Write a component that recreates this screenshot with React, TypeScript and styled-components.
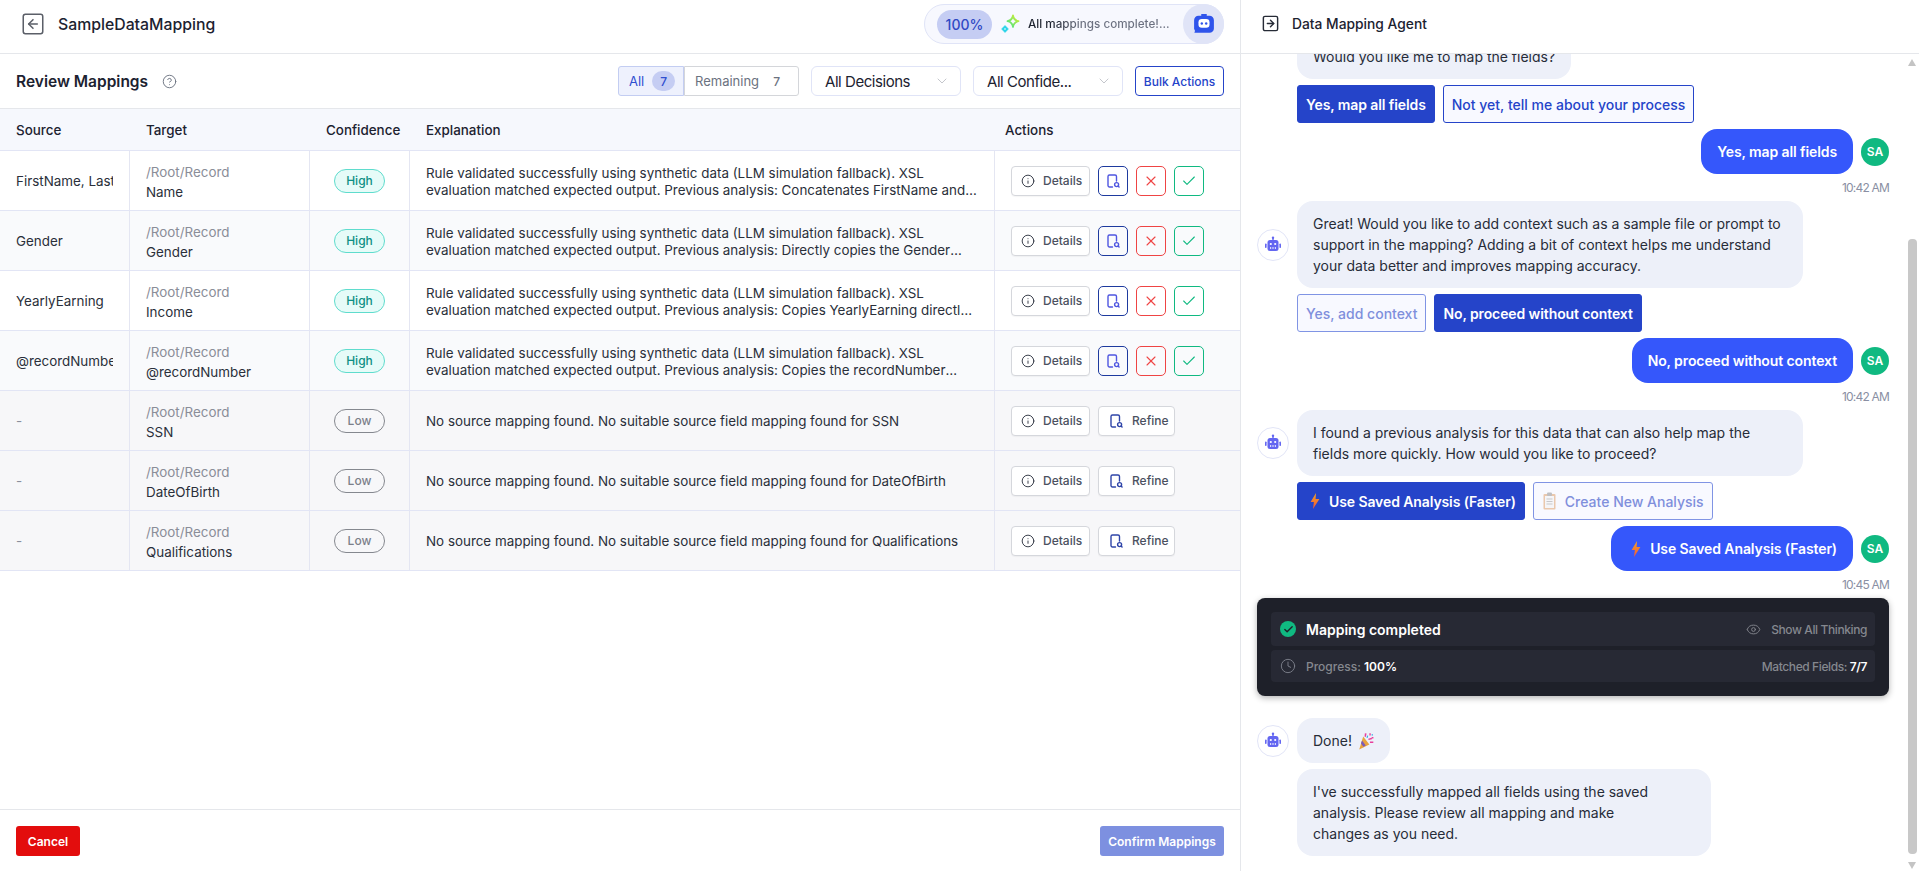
import React from 'react'
import styled, { createGlobalStyle } from 'styled-components'
import { Check, ChevronDown, CircleHelp, Clock, Eye, Info, SquareArrowLeft, SquareArrowRight, X } from 'lucide-react'

const GlobalStyle = createGlobalStyle`
  html, body { margin: 0; padding: 0; height: 100%; background: #fff; overflow: hidden; }
  body { font-family: Inter, "Noto Sans", sans-serif; color: #1f2430; }
  * { box-sizing: border-box; }
`

type Row = { source: string; target: string; confidence: 'High' | 'Low'; explanation: string }

const passed = 'Rule validated successfully using synthetic data (LLM simulation fallback). XSL evaluation matched expected output. Previous analysis: '
const missing = 'No source mapping found. No suitable source field mapping found for '

const rows: Row[] = [
  { source: 'FirstName, LastName', target: 'Name', confidence: 'High', explanation: passed + 'Concatenates FirstName and LastName into the Name field' },
  { source: 'Gender', target: 'Gender', confidence: 'High', explanation: passed + 'Directly copies the Gender value from source to the target field' },
  { source: 'YearlyEarning', target: 'Income', confidence: 'High', explanation: passed + 'Copies YearlyEarning directly to the Income field in target' },
  { source: '@recordNumber', target: '@recordNumber', confidence: 'High', explanation: passed + 'Copies the recordNumber attribute from source to target field' },
  { source: '-', target: 'SSN', confidence: 'Low', explanation: missing + 'SSN' },
  { source: '-', target: 'DateOfBirth', confidence: 'Low', explanation: missing + 'DateOfBirth' },
  { source: '-', target: 'Qualifications', confidence: 'Low', explanation: missing + 'Qualifications' },
]

const RefineIcon = () => (
  <svg width="16" height="16" viewBox="0 0 16 16" fill="none" stroke="currentColor" strokeWidth="1.4" strokeLinecap="round">
    <path d="M7.5 14H4.5A1.5 1.5 0 0 1 3 12.5V3.5A1.5 1.5 0 0 1 4.5 2H10A1.5 1.5 0 0 1 11.5 3.5V8" />
    <circle cx="11.6" cy="11.6" r="2" />
    <path d="M13.2 13.2l.9.9" />
  </svg>
)

const BotIcon = () => (
  <svg width="18" height="18" viewBox="0 0 18 18" fill="#6366f1">
    <rect x="8.3" y="1" width="1.4" height="3" />
    <circle cx="9" cy="1.8" r="1.2" />
    <rect x="3.5" y="4" width="11" height="11" rx="2.5" />
    <rect x="1" y="7.5" width="1.6" height="4.5" rx=".8" />
    <rect x="15.4" y="7.5" width="1.6" height="4.5" rx=".8" />
    <circle cx="6.8" cy="8" r="1.1" fill="#fff" />
    <circle cx="11.2" cy="8" r="1.1" fill="#fff" />
    <path d="M6 11.2h1.2v1.6H6zM8.4 11.2h1.2v1.6H8.4zM10.8 11.2H12v1.6h-1.2z" fill="#fff" />
  </svg>
)

const ChatBotIcon = () => (
  <svg width="22" height="22" viewBox="0 0 20 20">
    <path d="M5 2.5h2.5V1h5v1.5H15A4 4 0 0 1 19 6.5V14a4 4 0 0 1-4 4H1.2C2 16.8 2 15.8 1 14.6V6.5a4 4 0 0 1 4-4Z" fill="#2f54eb" />
    <rect x="5" y="5.5" width="10" height="8" rx="3" fill="#fff" />
    <circle cx="8" cy="9.5" r="1.1" fill="#2f54eb" />
    <circle cx="12" cy="9.5" r="1.1" fill="#2f54eb" />
  </svg>
)

const SparkleIcon = () => (
  <svg width="20" height="20" viewBox="0 0 20 20" fill="none" strokeWidth="1.8" strokeLinejoin="round">
    <defs>
      <linearGradient id="sparkA" x1="0" y1="1" x2="1" y2="0">
        <stop offset="0" stopColor="#3fe08a" />
        <stop offset="1" stopColor="#d9ef2c" />
      </linearGradient>
    </defs>
    <path d="M13 1.5c.5 3.5 1.8 5 5.5 5.7-3.7.7-5 2.2-5.5 5.8-.5-3.6-1.8-5.1-5.5-5.8 3.7-.7 5-2.2 5.5-5.7Z" stroke="url(#sparkA)" />
    <path d="M5 11.5l3.4 3.5L5 18.5 1.6 15Z" fill="#27d3e8" stroke="#27d3e8" strokeWidth=".6" />
    <path d="M5 14l1 1-1 1-1-1Z" fill="#eafcff" />
  </svg>
)

const BoltIcon = () => (
  <svg width="10" height="16" viewBox="0 0 10 16">
    <defs>
      <linearGradient id="boltA" x1="0" y1="0" x2="0" y2="1">
        <stop offset="0" stopColor="#f5a623" />
        <stop offset="1" stopColor="#f0553a" />
      </linearGradient>
    </defs>
    <path d="M6 0 .6 9h3.3L3 16l6.4-10H5.6Z" fill="url(#boltA)" />
  </svg>
)

const ClipboardIcon = () => (
  <svg width="13" height="18" viewBox="0 0 13 18" opacity=".6">
    <rect x=".5" y="2" width="12" height="15.5" rx="1" fill="#e2a878" />
    <rect x="2" y="4" width="9" height="12" fill="#f4f4f4" />
    <rect x="4" y=".5" width="5" height="3.5" rx="1" fill="#9a9a9a" />
    <path d="M3.5 7h6M3.5 9.5h6M3.5 12h6" stroke="#a9a9a9" />
  </svg>
)

const PartyIcon = () => (
  <svg width="16" height="18" viewBox="0 0 14 16">
    <path d="M4.5 4 10 11 1 15.5Z" fill="#e8a33d" />
    <path d="M3.5 7.5 6.8 12 4.6 13.2 2.5 10Z" fill="#7a5bb8" />
    <path d="M6 1l1.5.4-.6 3-1.2-.3ZM10 1h1.2v2H10ZM12 4.5h1.6v1.2H12ZM9 6l3-.8.3 1.200-3 .8ZM10.500 8.500h3v1.200h-3Z" fill="#e83e9c" />
    <path d="M8 3l1 .4-.6 2-1-.4ZM12 2h1.200v1.200H12Z" fill="#2fa8e8" />
  </svg>
)

const App = () => {
  return (
    <Page>
      <GlobalStyle />
      <Workspace>
        <TopBar>
          <TitleGroup>
            <SquareArrowLeft size={26} strokeWidth={1.4} color="#5b5f68" />
            <PageTitle>SampleDataMapping</PageTitle>
          </TitleGroup>
          <StatusPill>
            <Percent>100%</Percent>
            <SparkleIcon />
            <StatusText>All mappings complete!...</StatusText>
            <BotBadge><ChatBotIcon /></BotBadge>
          </StatusPill>
        </TopBar>

        <Toolbar>
          <SectionTitle>Review Mappings</SectionTitle>
          <CircleHelp size={15} strokeWidth={1.5} color="#6b7280" />
          <Filters>
            <Segments>
              <Segment $active>All <Count $active>7</Count></Segment>
              <Segment>Remaining <Count>7</Count></Segment>
            </Segments>
            <SelectBox>All Decisions<ChevronDown size={16} strokeWidth={1.5} color="#c4c6cc" /></SelectBox>
            <SelectBox>All Confide...<ChevronDown size={16} strokeWidth={1.5} color="#c4c6cc" /></SelectBox>
            <BulkButton>Bulk Actions</BulkButton>
          </Filters>
        </Toolbar>

        <TableHead>
          <HeadCell>Source</HeadCell>
          <HeadCell>Target</HeadCell>
          <HeadCell>Confidence</HeadCell>
          <HeadCell>Explanation</HeadCell>
          <HeadCell $tight>Actions</HeadCell>
        </TableHead>

        {rows.map((row, i) => (
          <TableRow key={row.target} $low={row.confidence === 'Low'} $odd={i % 2 === 1}>
            <SourceCell $empty={row.source === '-'}><SourceText>{row.source}</SourceText></SourceCell>
            <TargetCell>
              <TargetPath>/Root/Record</TargetPath>
              <TargetName>{row.target}</TargetName>
            </TargetCell>
            <BadgeCell><Badge $low={row.confidence === 'Low'}>{row.confidence}</Badge></BadgeCell>
            <TextCell><Explanation>{row.explanation}</Explanation></TextCell>
            <ActionCell>
              <ActionButton><Info size={14} strokeWidth={1.6} color="#2d3340" />Details</ActionButton>
              {row.confidence === 'High' ? (
                <>
                  <IconButton $tone="blue"><RefineIcon /></IconButton>
                  <IconButton $tone="red"><X size={16} strokeWidth={1.6} /></IconButton>
                  <IconButton $tone="green"><Check size={16} strokeWidth={1.6} /></IconButton>
                </>
              ) : (
                <ActionButton $refine><RefineTint><RefineIcon /></RefineTint>Refine</ActionButton>
              )}
            </ActionCell>
          </TableRow>
        ))}

        <Footer>
          <CancelButton>Cancel</CancelButton>
          <ConfirmButton>Confirm Mappings</ConfirmButton>
        </Footer>
      </Workspace>

      <Agent>
        <AgentHeader>
          <SquareArrowRight size={19} strokeWidth={1.8} color="#262b36" />
          <AgentTitle>Data Mapping Agent</AgentTitle>
        </AgentHeader>
        <Messages>
          <BotMessage>
            <span />
            <Bubble>Would you like me to map the fields?</Bubble>
            <Options>
              <Option $solid>Yes, map all fields</Option>
              <Option>Not yet, tell me about your process</Option>
            </Options>
          </BotMessage>
          <UserMessage>Yes, map all fields</UserMessage>
          <Time>10:42 AM</Time>

          <BotMessage>
            <BotAvatar />
            <Bubble $wide={506}>Great! Would you like to add context such as a sample file or prompt to support in the mapping? Adding a bit of context helps me understand your data better and improves mapping accuracy.</Bubble>
            <Options>
              <Option $faded>Yes, add context</Option>
              <Option $solid>No, proceed without context</Option>
            </Options>
          </BotMessage>
          <UserMessage>No, proceed without context</UserMessage>
          <Time>10:42 AM</Time>

          <BotMessage>
            <BotAvatar />
            <Bubble $wide={506}>I found a previous analysis for this data that can also help map the fields more quickly. How would you like to proceed?</Bubble>
            <Options>
              <Option $solid><BoltIcon />Use Saved Analysis (Faster)</Option>
              <Option $faded><ClipboardIcon />Create New Analysis</Option>
            </Options>
          </BotMessage>
          <UserMessage><BoltIcon />Use Saved Analysis (Faster)</UserMessage>
          <Time>10:45 AM</Time>

          <ResultCard>
            <ResultRow $tall>
              <CompletedIcon><Check size={11} strokeWidth={3} color="#1e2029" /></CompletedIcon>
              <ResultTitle>Mapping completed</ResultTitle>
              <ThinkingLink><Eye size={15} strokeWidth={1.5} />Show All Thinking</ThinkingLink>
            </ResultRow>
            <ResultRow>
              <Clock size={16} strokeWidth={1.4} color="#7d808b" />
              <ResultLabel>Progress: <strong>100%</strong></ResultLabel>
              <ResultMatched>Matched Fields: <strong>7/7</strong></ResultMatched>
            </ResultRow>
          </ResultCard>

          <BotMessage>
            <BotAvatar />
            <Bubble>Done! <PartyIcon /></Bubble>
            <Bubble $column $wide={414}>I've successfully mapped all fields using the saved analysis. Please review all mapping and make changes as you need.</Bubble>
          </BotMessage>
        </Messages>
        <Scrollbar>
          <ArrowUp />
          <Thumb />
          <ArrowDown />
        </Scrollbar>
      </Agent>
    </Page>
  )
}

const BotAvatar = () => <AvatarCircle><BotIcon /></AvatarCircle>

const UserMessage = ({ children }: { children: React.ReactNode }) => (
  <UserLine>
    <UserBubble>{children}</UserBubble>
    <UserAvatar>SA</UserAvatar>
  </UserLine>
)

export default App

const Page = styled.div`
  display: flex;
  width: 1919px;
  height: 871px;
  overflow: hidden;
`

const Workspace = styled.main`
  width: 1240px;
  height: 871px;
  display: flex;
  flex-direction: column;
`

const TopBar = styled.header`
  height: 54px;
  flex: none;
  display: flex;
  align-items: center;
  justify-content: space-between;
  padding: 0 16px 5px 20px;
  border-bottom: 1px solid #e5e7eb;
`

const TitleGroup = styled.div`
  display: flex;
  align-items: center;
  gap: 12px;
`

const PageTitle = styled.h1`
  margin: 0;
  font-size: 15.8px;
  font-weight: 500;
  color: #1c2230;
`

const StatusPill = styled.div`
  width: 300px;
  height: 40px;
  display: flex;
  align-items: center;
  padding-left: 12px;
  border: 1px solid #e0e4f7;
  border-radius: 20px;
  background: #f7f8fe;
`

const Percent = styled.span`
  width: 55px;
  height: 29px;
  display: flex;
  align-items: center;
  justify-content: center;
  margin-right: 8px;
  border-radius: 15px;
  background: #c5cdf3;
  color: #3049c4;
  font-size: 14px;
  font-weight: 500;
`

const StatusText = styled.span`
  margin-left: 8px;
  font-size: 11.7px;
  font-weight: 500;
  background: linear-gradient(90deg, #1f2430 0, #1f2430 24px, #6b7080 50px);
  background-clip: text;
  -webkit-background-clip: text;
  color: transparent;
`

const BotBadge = styled.span`
  width: 41px;
  height: 40px;
  margin: -1px -1px -1px auto;
  display: flex;
  align-items: center;
  justify-content: center;
  border-radius: 50%;
  background: #e0e4f7;
`

const Toolbar = styled.div`
  height: 55px;
  flex: none;
  display: flex;
  align-items: center;
  gap: 14px;
  padding: 0 16px;
  border-bottom: 1px solid #e5e7eb;
`

const SectionTitle = styled.h2`
  margin: 0;
  font-size: 15.5px;
  font-weight: 600;
  color: #1c2230;
`

const Filters = styled.div`
  margin-left: auto;
  display: flex;
  align-items: center;
  gap: 12px;
`

const Segments = styled.div`
  width: 181px;
  height: 30px;
  display: grid;
  grid-template-columns: 66px 1fr;
`

const Segment = styled.div<{ $active?: boolean }>`
  display: flex;
  align-items: center;
  justify-content: ${(p) => (p.$active ? 'flex-start' : 'space-between')};
  gap: 8px;
  padding: ${(p) => (p.$active ? '0 5px 0 10px' : '0 18px 0 10px')};
  font-size: 13px;
  color: ${(p) => (p.$active ? '#2f4fd0' : '#6b7280')};
  background: ${(p) => (p.$active ? '#eef1fd' : '#fff')};
  border: 1px solid ${(p) => (p.$active ? '#c3cdf2' : '#d4d6da')};
  border-radius: ${(p) => (p.$active ? '3px 0 0 3px' : '0 3px 3px 0')};
`

const Count = styled.span<{ $active?: boolean }>`
  min-width: ${(p) => (p.$active ? '23px' : '0')};
  height: 20px;
  display: flex;
  align-items: center;
  justify-content: center;
  border-radius: 10px;
  font-size: 12px;
  font-weight: 500;
  background: ${(p) => (p.$active ? '#c5cdf3' : 'transparent')};
`

const SelectBox = styled.div`
  width: 150px;
  height: 30px;
  display: flex;
  align-items: center;
  justify-content: space-between;
  padding: 0 10px 0 13px;
  border: 1px solid #e0e4f7;
  border-radius: 6px;
  font-size: 15px;
  letter-spacing: -0.45px;
  color: #1c2230;
`

const BulkButton = styled.button`
  width: 89px;
  height: 30px;
  padding: 0;
  border: 1px solid #2544c9;
  border-radius: 4px;
  background: #fff;
  color: #2544c9;
  font: 500 12px Inter, sans-serif;
`

const columns = '130px 180px 100px 585px 1fr'

const TableHead = styled.div`
  height: 42px;
  flex: none;
  display: grid;
  grid-template-columns: ${columns};
  align-items: center;
  background: #f6f8fd;
  border-bottom: 1px solid #e2e5f5;
`

const HeadCell = styled.div<{ $tight?: boolean }>`
  padding-left: ${(p) => (p.$tight ? '10px' : '16px')};
  font-size: 13.4px;
  font-weight: 500;
  color: #1c2230;
`

const TableRow = styled.div<{ $low: boolean; $odd: boolean }>`
  height: 60px;
  flex: none;
  display: grid;
  grid-template-columns: ${columns};
  border-bottom: 1px solid #e2e5f5;
  background: ${(p) => (p.$low ? '#f7f7f9' : p.$odd ? '#f9fafc' : '#fff')};
`

const Cell = styled.div`
  border-right: 1px solid #e4e6f2;
  padding: 0 16px;
  display: flex;
  align-items: center;
  min-width: 0;
`

const SourceCell = styled(Cell)<{ $empty: boolean }>`
  font-size: 13.4px;
  color: ${(p) => (p.$empty ? '#8a8f9c' : '#2a2f3a')};
`

const SourceText = styled.span`
  display: block;
  overflow: hidden;
  white-space: nowrap;
`

const TargetCell = styled(Cell)`
  flex-direction: column;
  align-items: flex-start;
  justify-content: center;
  padding-top: 3px;
  font-size: 13.4px;
  line-height: 20px;
`

const TargetPath = styled.span`
  color: #8a8d98;
`

const TargetName = styled.span`
  color: #2a2f3a;
`

const BadgeCell = styled(Cell)`
  justify-content: center;
`

const Badge = styled.span<{ $low: boolean }>`
  width: 51px;
  height: 24px;
  display: flex;
  align-items: center;
  justify-content: center;
  border-radius: 12px;
  font-size: 12px;
  font-weight: 500;
  color: ${(p) => (p.$low ? '#7c7f8a' : '#0f8f85')};
  background: ${(p) => (p.$low ? 'transparent' : '#e6fbf8')};
  border: 1px solid ${(p) => (p.$low ? '#85888f' : '#5fdccd')};
`

const TextCell = styled(Cell)`
  padding-top: 2px;
  font-size: 13.4px;
  line-height: 17px;
  color: #2a2f3a;
`

const Explanation = styled.div`
  display: -webkit-box;
  -webkit-line-clamp: 2;
  -webkit-box-orient: vertical;
  overflow: hidden;
`

const ActionCell = styled.div`
  padding-left: 16px;
  display: flex;
  align-items: center;
  gap: 8px;
`

const ActionButton = styled.button<{ $refine?: boolean }>`
  width: ${(p) => (p.$refine ? '77px' : '79px')};
  height: 30px;
  display: flex;
  align-items: center;
  gap: 8px;
  padding: 0 0 0 9px;
  border: 1px solid #d5d7dc;
  border-radius: 4px;
  background: #fff;
  color: #4b5160;
  font: 500 12px Inter, sans-serif;
  box-shadow: 0 1px 1px rgba(0, 0, 0, 0.04);
`

const RefineTint = styled.span`
  display: flex;
  color: #2f45a8;
`

const tones = {
  blue: { border: '#1e3a9e', color: '#4f56e0' },
  red: { border: '#ef4444', color: '#ef4444' },
  green: { border: '#10b981', color: '#10b981' },
}

const IconButton = styled.button<{ $tone: keyof typeof tones }>`
  width: 30px;
  height: 30px;
  display: flex;
  align-items: center;
  justify-content: center;
  padding: 0;
  border-radius: 5px;
  background: transparent;
  border: 1px solid ${(p) => tones[p.$tone].border};
  color: ${(p) => tones[p.$tone].color};
`

const Footer = styled.footer`
  margin-top: auto;
  height: 62px;
  flex: none;
  display: flex;
  align-items: center;
  justify-content: space-between;
  padding: 1px 16px 0;
  border-top: 1px solid #e5e7eb;
`

const FooterButton = styled.button`
  height: 30px;
  padding: 0;
  border: 0;
  border-radius: 3px;
  color: #fff;
  font: 600 12px Inter, sans-serif;
`

const CancelButton = styled(FooterButton)`
  width: 64px;
  background: #e30d0d;
`

const ConfirmButton = styled(FooterButton)`
  width: 124px;
  background: #7d90e0;
`

const Agent = styled.aside`
  position: relative;
  width: 679px;
  height: 871px;
  display: flex;
  flex-direction: column;
  border-left: 1px solid #e5e7eb;
`

const AgentHeader = styled.header`
  height: 54px;
  flex: none;
  display: flex;
  align-items: center;
  gap: 12px;
  padding: 0 0 6px 20px;
  border-bottom: 1px solid #e5e7eb;
  background: #fff;
`

const AgentTitle = styled.h2`
  margin: 0;
  font-size: 13.8px;
  font-weight: 500;
  color: #1c2230;
`

const Messages = styled.div`
  flex: 1;
  min-height: 0;
  overflow: hidden;
  display: flex;
  flex-direction: column;
  justify-content: flex-end;
  gap: 6px;
  padding: 0 30px 15px 16px;
`

const BotMessage = styled.div`
  flex: none;
  display: grid;
  grid-template-columns: 32px 1fr;
  column-gap: 8px;
  row-gap: 6px;
  align-items: center;
`

const AvatarCircle = styled.div`
  width: 32px;
  height: 32px;
  display: flex;
  align-items: center;
  justify-content: center;
  border: 1px solid #e2e5f7;
  border-radius: 50%;
  background: #fff;
`

const Bubble = styled.div<{ $wide?: number; $column?: boolean }>`
  grid-column: ${(p) => (p.$column ? '2' : 'auto')};
  justify-self: start;
  ${(p) => (p.$wide ? `width: ${p.$wide}px;` : '')}
  padding: 12px ${(p) => (p.$column ? '40px' : '16px')} 12px 16px;
  border-radius: 16px;
  background: #edf0f9;
  font-size: 14px;
  line-height: 21px;
  color: #272c38;

  svg {
    margin-left: 2px;
    vertical-align: -4px;
  }
`

const Options = styled.div`
  grid-column: 2;
  display: flex;
  gap: 8px;
`

const Option = styled.button<{ $solid?: boolean; $faded?: boolean }>`
  height: 38px;
  display: flex;
  align-items: center;
  gap: 9px;
  padding: 0 8px;
  border: 1px solid ${(p) => (p.$faded ? '#8094e4' : '#2544c9')};
  border-radius: 3px;
  background: ${(p) => (p.$solid ? '#2544c9' : '#f8f9ff')};
  color: ${(p) => (p.$solid ? '#fff' : p.$faded ? '#7f8fdc' : '#2544c9')};
  font: ${(p) => (p.$solid ? 600 : 500)} 14px Inter, sans-serif;
  letter-spacing: ${(p) => (p.$solid ? '-0.1px' : '0')};

  svg:first-child {
    margin-left: ${(p) => (p.$solid ? '4px' : '1px')};
  }
`

const UserLine = styled.div`
  flex: none;
  display: flex;
  justify-content: flex-end;
  align-items: center;
  gap: 8px;
`

const UserBubble = styled.div`
  height: 45px;
  display: flex;
  align-items: center;
  gap: 9px;
  padding: 0 16px;
  border-radius: 16px;
  background: #3557fb;
  color: #fff;
  font-size: 14px;
  font-weight: 600;
  letter-spacing: -0.1px;

  svg:first-child {
    margin-left: 4px;
  }
`

const UserAvatar = styled.div`
  width: 28px;
  height: 28px;
  display: flex;
  align-items: center;
  justify-content: center;
  border-radius: 50%;
  background: #10b981;
  color: #fff;
  font-size: 12px;
  font-weight: 600;
`

const Time = styled.div`
  flex: none;
  height: 15px;
  line-height: 15px;
  text-align: right;
  font-size: 12px;
  letter-spacing: -0.8px;
  color: #8a8fa3;
`

const ResultCard = styled.div`
  flex: none;
  margin-bottom: 16px;
  padding: 14px;
  display: flex;
  flex-direction: column;
  gap: 4px;
  border-radius: 8px;
  background: #1e2029;
  box-shadow: 0 2px 6px rgba(0, 0, 0, 0.3);
`

const ResultRow = styled.div<{ $tall?: boolean }>`
  height: ${(p) => (p.$tall ? '34px' : '32px')};
  display: flex;
  align-items: center;
  gap: 10px;
  padding: 0 8px 0 9px;
  border-radius: 4px;
  background: #272934;
`

const CompletedIcon = styled.span`
  width: 16px;
  height: 16px;
  display: flex;
  align-items: center;
  justify-content: center;
  border-radius: 50%;
  background: #10b981;
`

const ResultTitle = styled.span`
  color: #fff;
  font-size: 14px;
  font-weight: 600;
`

const ThinkingLink = styled.span`
  margin-left: auto;
  display: flex;
  align-items: center;
  gap: 10px;
  color: #85888f;
  font-size: 12px;
  font-weight: 500;
  letter-spacing: -0.4px;
`

const ResultLabel = styled.span`
  color: #85888f;
  font-size: 12px;
  font-weight: 500;

  strong {
    color: #fff;
    font-weight: 600;
  }
`

const ResultMatched = styled(ResultLabel)`
  margin-left: auto;
  letter-spacing: -0.4px;
`

const Scrollbar = styled.div`
  position: absolute;
  top: 54px;
  right: 0;
  bottom: 0;
  width: 11px;
  display: flex;
  flex-direction: column;
  align-items: flex-start;
  background: #fff;
`

const ArrowUp = styled.span`
  margin-top: 5px;
  border-left: 4.5px solid transparent;
  border-right: 4.5px solid transparent;
  border-bottom: 7px solid #c4c4c4;
`

const Thumb = styled.span`
  width: 9px;
  height: 615px;
  margin-top: 173px;
  border-radius: 4px;
  background: #c8c8c8;
`

const ArrowDown = styled.span`
  margin-top: 8px;
  border-left: 4.5px solid transparent;
  border-right: 4.5px solid transparent;
  border-top: 7px solid #c4c4c4;
`
